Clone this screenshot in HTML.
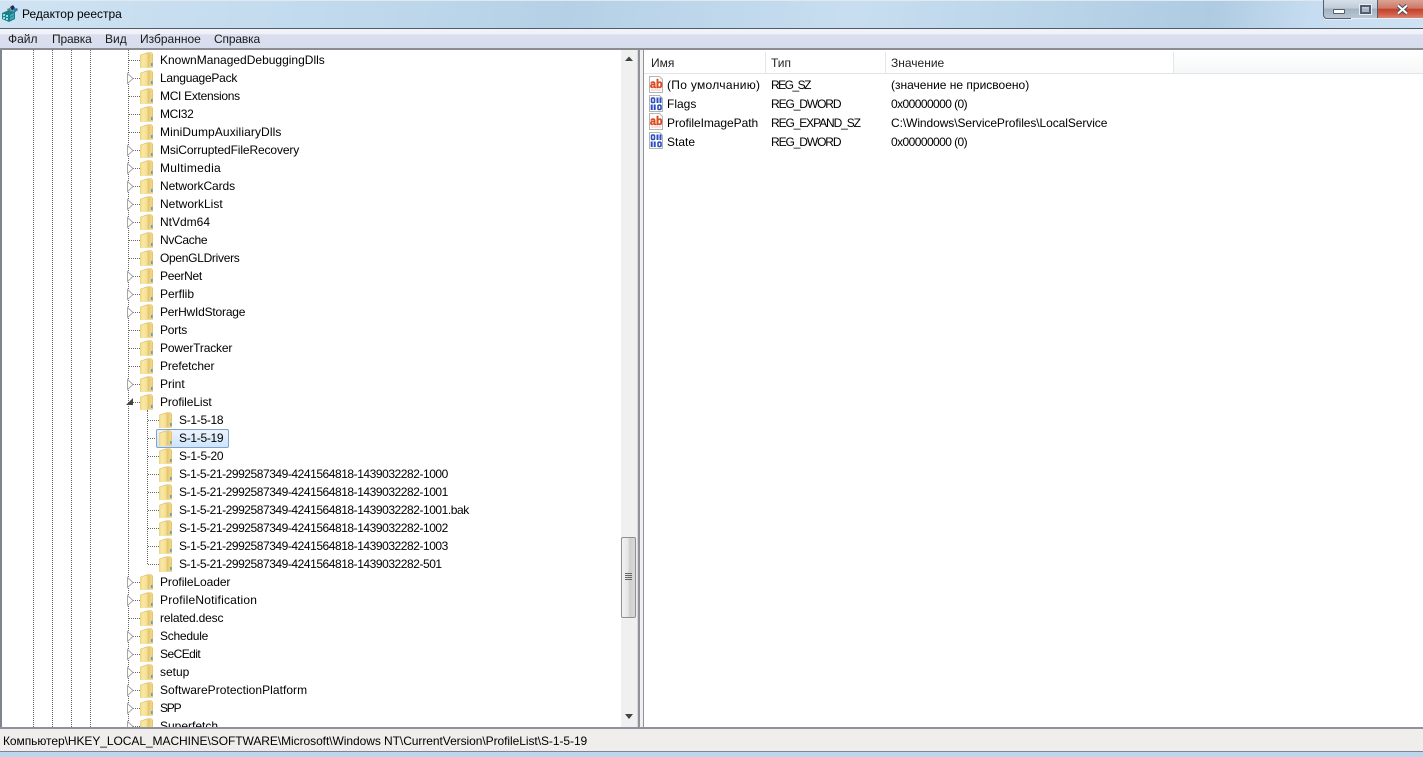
<!DOCTYPE html>
<html><head><meta charset="utf-8"><style>
html,body{margin:0;padding:0;width:1423px;height:757px;overflow:hidden;background:#fff}
body{position:relative;font:12px/16px "Liberation Sans","DejaVu Sans",sans-serif;color:#000}
div,span,svg{position:absolute}
.t{white-space:nowrap;height:16px}
.v{width:0;border-left:1px dotted #666}
.h{height:0;border-top:1px dotted #666}
.m{top:31px;font-size:12px;color:#1a1a1a}
.n{letter-spacing:-.45px}
.c{letter-spacing:-.3px}
.x{letter-spacing:-.57px}
.r{letter-spacing:-1.1px}
</style></head><body>
<svg width="0" height="0" style="left:0;top:0"><defs>
<linearGradient id="fg" x1="0" x2="1" y1="0" y2="0"><stop offset="0" stop-color="#eed27e"/><stop offset=".35" stop-color="#f8e9a6"/><stop offset="1" stop-color="#f4de90"/></linearGradient>
<linearGradient id="fr" x1="0" x2="1" y1="0" y2="0"><stop offset="0" stop-color="#e4c46c"/><stop offset="1" stop-color="#f3d989"/></linearGradient>
<g id="f"><path d="M1 3L8 0.500h4.500L14 2v13.500H1z" fill="#d9b45a"/><path d="M1 3.500L8.500 1V16H1z" fill="url(#fg)"/><path d="M8.500 1h5v14h-5z" fill="url(#fr)"/><path d="M12 11h1.500v3H12z" fill="#5a9fd8"/></g>
<g id="a"><path d="M1.500 0.500v10l5.500-5z" fill="#fff" stroke="#a6a6a6"/></g>
<g id="ab"><path d="M1.500 .5h10l3 3v13h-13z" fill="#fff" stroke="#b4b4b4"/><text x="2" y="12" font-family="Liberation Sans" font-weight="bold" font-size="12" stroke="#dd4a22" stroke-width=".5" fill="#dd4a22" textLength="12.500" lengthAdjust="spacingAndGlyphs">ab</text><rect x="3" y="13.500" width="10" height="1" fill="#e8c4b8"/></g>
<g id="bin"><path d="M1.500 .5h10l3 3v13h-13z" fill="#fff" stroke="#b4b4b4"/><rect x="3.500" y="3" width="3" height="4.500" rx="1" fill="none" stroke="#2b4fc0" stroke-width="1.600"/><rect x="8.500" y="2.500" width="2" height="5.500" fill="#2b4fc0"/><rect x="11.500" y="2.500" width="2" height="5.500" fill="#2b4fc0"/><rect x="2.700" y="9.500" width="2" height="5.500" fill="#2b4fc0"/><rect x="5.700" y="9.500" width="2" height="5.500" fill="#2b4fc0"/><rect x="10" y="10.200" width="3" height="4.300" rx="1" fill="none" stroke="#2b4fc0" stroke-width="1.600"/></g>
</defs></svg>

<!-- title bar -->
<div style="left:0;top:0;width:1423px;height:28px;background:linear-gradient(100deg,#cfe3f3 0,#c3dbee 20%,#b5d0e6 40%,#c8def0 60%,#aecbe2 85%,#c6dcf0 92%,#cfe2f3 100%)"></div>
<div style="left:0;top:0;width:1423px;height:1px;background:#dfe9f2"></div>
<svg style="left:1px;top:5px" width="18" height="18"><path d="M1 8l7-3 6 2v7l-6 3-7-3z" fill="#1c7e8e"/><path d="M2 9h2v2H2zM5 10h2v2H5zM2 12h2v2H2zM5 13h2v2H5z" fill="#8fe0e0"/><path d="M9 10l4-2v2l-4 2zM9 13l4-2v2l-4 2z" fill="#3fb0b8"/><path d="M9 2l3-2 2 3-3 3z" fill="#1d2f6a"/><path d="M12 4l4-1 1 2-4 3z" fill="#2a7fa8"/><path d="M6 4l3-1 1 2-3 1z" fill="#4a8f3a"/></svg>
<div class="t" style="left:22px;top:6px;font-size:12px">Редактор реестра</div>
<!-- caption buttons -->
<div style="left:1323px;top:0;width:27px;height:18px;border:1px solid #55606e;border-top:0;border-radius:0 0 0 4px;background:linear-gradient(#d6e0ea 0,#c0ccd8 45%,#a3b2c2 50%,#b8c6d4 100%);box-shadow:0 1px 0 #e6f0f8"></div>
<div style="left:1333px;top:9px;width:10px;height:3px;background:#fff;border:1px solid #555e70;border-radius:1px"></div>
<div style="left:1351px;top:0;width:26px;height:18px;border-right:1px solid #55606e;background:linear-gradient(#d6e0ea 0,#c0ccd8 45%,#a3b2c2 50%,#b8c6d4 100%);box-shadow:0 1px 0 #e6f0f8"></div>
<div style="left:1360px;top:5px;width:7px;height:5px;border:2px solid #555e70;outline:1px solid #e8eef4"></div>
<div style="left:1378px;top:0;width:45px;height:18px;background:linear-gradient(#dba394 0,#cd7a68 45%,#c4402a 52%,#d2604a 80%,#d88672 100%);box-shadow:0 1px 0 #e6f0f8"></div>
<svg style="left:1396px;top:4px" width="14" height="11"><path d="M2 1.500L11 9.500M11 1.500L2 9.500" stroke="#48505c" stroke-width="4"/><path d="M2 1.500L11 9.500M11 1.500L2 9.500" stroke="#fff" stroke-width="2"/></svg>
<!-- menu -->
<div style="left:0;top:28px;width:1423px;height:1px;background:#4f5a66"></div>
<div style="left:0;top:29px;width:1423px;height:19px;background:linear-gradient(#f2f4f8 0,#f0f2f7 25%,#dadfef 30%,#d8ddee 100%)"></div>
<div style="left:0;top:48px;width:1423px;height:2px;background:#8a8d92"></div>
<div class="t m" style="left:8px">Файл</div>
<div class="t m" style="left:52px;letter-spacing:-.15px">Правка</div>
<div class="t m" style="left:105px">Вид</div>
<div class="t m" style="left:140px">Избранное</div>
<div class="t m" style="left:214px;letter-spacing:-.15px">Справка</div>

<!-- tree -->
<div style="left:0;top:50px;width:2px;height:677px;background:#7f8590"></div>
<div class="v" style="left:33px;top:50px;height:677px"></div>
<div class="v" style="left:52px;top:50px;height:677px"></div>
<div class="v" style="left:71px;top:50px;height:677px"></div>
<div class="v" style="left:90px;top:50px;height:677px"></div>
<div class="v" style="left:128px;top:50px;height:677px"></div>
<div class="v" style="left:147px;top:410px;height:154px"></div>
<div class="h" style="left:129px;top:60px;width:11px"></div><div class="h" style="left:129px;top:78px;width:11px"></div><div class="h" style="left:129px;top:96px;width:11px"></div><div class="h" style="left:129px;top:114px;width:11px"></div><div class="h" style="left:129px;top:132px;width:11px"></div><div class="h" style="left:129px;top:150px;width:11px"></div><div class="h" style="left:129px;top:168px;width:11px"></div><div class="h" style="left:129px;top:186px;width:11px"></div><div class="h" style="left:129px;top:204px;width:11px"></div><div class="h" style="left:129px;top:222px;width:11px"></div><div class="h" style="left:129px;top:240px;width:11px"></div><div class="h" style="left:129px;top:258px;width:11px"></div><div class="h" style="left:129px;top:276px;width:11px"></div><div class="h" style="left:129px;top:294px;width:11px"></div><div class="h" style="left:129px;top:312px;width:11px"></div><div class="h" style="left:129px;top:330px;width:11px"></div><div class="h" style="left:129px;top:348px;width:11px"></div><div class="h" style="left:129px;top:366px;width:11px"></div><div class="h" style="left:129px;top:384px;width:11px"></div><div class="h" style="left:129px;top:402px;width:11px"></div><div class="h" style="left:129px;top:582px;width:11px"></div><div class="h" style="left:129px;top:600px;width:11px"></div><div class="h" style="left:129px;top:618px;width:11px"></div><div class="h" style="left:129px;top:636px;width:11px"></div><div class="h" style="left:129px;top:654px;width:11px"></div><div class="h" style="left:129px;top:672px;width:11px"></div><div class="h" style="left:129px;top:690px;width:11px"></div><div class="h" style="left:129px;top:708px;width:11px"></div><div class="h" style="left:129px;top:726px;width:11px"></div>
<div class="h" style="left:148px;top:420px;width:11px"></div><div class="h" style="left:148px;top:438px;width:11px"></div><div class="h" style="left:148px;top:456px;width:11px"></div><div class="h" style="left:148px;top:474px;width:11px"></div><div class="h" style="left:148px;top:492px;width:11px"></div><div class="h" style="left:148px;top:510px;width:11px"></div><div class="h" style="left:148px;top:528px;width:11px"></div><div class="h" style="left:148px;top:546px;width:11px"></div><div class="h" style="left:148px;top:564px;width:11px"></div>

<div style="left:156px;top:429px;width:71px;height:17px;border:1px solid #7da2ce;border-radius:2px;background:linear-gradient(#ebf4fd,#cfe4fa)"></div>

<svg style="left:0;top:50px;overflow:hidden" width="621" height="677" viewBox="0 50 621 677">
<use href="#f" x="139" y="52"/><use href="#f" x="139" y="70"/><use href="#f" x="139" y="88"/><use href="#f" x="139" y="106"/><use href="#f" x="139" y="124"/><use href="#f" x="139" y="142"/><use href="#f" x="139" y="160"/><use href="#f" x="139" y="178"/><use href="#f" x="139" y="196"/><use href="#f" x="139" y="214"/><use href="#f" x="139" y="232"/><use href="#f" x="139" y="250"/><use href="#f" x="139" y="268"/><use href="#f" x="139" y="286"/><use href="#f" x="139" y="304"/><use href="#f" x="139" y="322"/><use href="#f" x="139" y="340"/><use href="#f" x="139" y="358"/><use href="#f" x="139" y="376"/><use href="#f" x="139" y="394"/>
<use href="#f" x="158" y="412"/><use href="#f" x="158" y="430"/><use href="#f" x="158" y="448"/><use href="#f" x="158" y="466"/><use href="#f" x="158" y="484"/><use href="#f" x="158" y="502"/><use href="#f" x="158" y="520"/><use href="#f" x="158" y="538"/><use href="#f" x="158" y="556"/>
<use href="#f" x="139" y="574"/><use href="#f" x="139" y="592"/><use href="#f" x="139" y="610"/><use href="#f" x="139" y="628"/><use href="#f" x="139" y="646"/><use href="#f" x="139" y="664"/><use href="#f" x="139" y="682"/><use href="#f" x="139" y="700"/><use href="#f" x="139" y="718"/>
<use href="#a" x="126" y="73"/><use href="#a" x="126" y="145"/><use href="#a" x="126" y="163"/><use href="#a" x="126" y="181"/><use href="#a" x="126" y="199"/><use href="#a" x="126" y="217"/><use href="#a" x="126" y="271"/><use href="#a" x="126" y="289"/><use href="#a" x="126" y="307"/><use href="#a" x="126" y="379"/><use href="#a" x="126" y="577"/><use href="#a" x="126" y="595"/><use href="#a" x="126" y="631"/><use href="#a" x="126" y="649"/><use href="#a" x="126" y="667"/><use href="#a" x="126" y="685"/><use href="#a" x="126" y="703"/><use href="#a" x="126" y="721"/>
<path d="M126 405h7v-7z" fill="#444"/>
</svg>

<div class="t" style="left:160px;top:52px">KnownManagedDebuggingDlls</div>
<div class="t" style="left:160px;top:70px;letter-spacing:-.25px">LanguagePack</div>
<div class="t" style="left:160px;top:88px;letter-spacing:-.3px">MCI Extensions</div>
<div class="t" style="left:160px;top:106px;letter-spacing:-.4px">MCI32</div>
<div class="t" style="left:160px;top:124px;letter-spacing:.1px">MiniDumpAuxiliaryDlls</div>
<div class="t" style="left:160px;top:142px;letter-spacing:-.12px">MsiCorruptedFileRecovery</div>
<div class="t" style="left:160px;top:160px;letter-spacing:.3px">Multimedia</div>
<div class="t" style="left:160px;top:178px;letter-spacing:-.08px">NetworkCards</div>
<div class="t" style="left:160px;top:196px">NetworkList</div>
<div class="t" style="left:160px;top:214px">NtVdm64</div>
<div class="t" style="left:160px;top:232px;letter-spacing:-.3px">NvCache</div>
<div class="t" style="left:160px;top:250px;letter-spacing:-.3px">OpenGLDrivers</div>
<div class="t" style="left:160px;top:268px;letter-spacing:-.3px">PeerNet</div>
<div class="t" style="left:160px;top:286px">Perflib</div>
<div class="t" style="left:160px;top:304px;letter-spacing:-.2px">PerHwIdStorage</div>
<div class="t" style="left:160px;top:322px;letter-spacing:-.2px">Ports</div>
<div class="t" style="left:160px;top:340px;letter-spacing:-.17px">PowerTracker</div>
<div class="t" style="left:160px;top:358px;letter-spacing:-.1px">Prefetcher</div>
<div class="t" style="left:160px;top:376px">Print</div>
<div class="t" style="left:160px;top:394px;letter-spacing:-.1px">ProfileList</div>
<div class="t c" style="left:179px;top:412px">S-1-5-18</div>
<div class="t c" style="left:179px;top:430px">S-1-5-19</div>
<div class="t c" style="left:179px;top:448px">S-1-5-20</div>
<div class="t n" style="left:179px;top:466px">S-1-5-21-2992587349-4241564818-1439032282-1000</div>
<div class="t n" style="left:179px;top:484px">S-1-5-21-2992587349-4241564818-1439032282-1001</div>
<div class="t n" style="left:179px;top:502px">S-1-5-21-2992587349-4241564818-1439032282-1001.bak</div>
<div class="t n" style="left:179px;top:520px">S-1-5-21-2992587349-4241564818-1439032282-1002</div>
<div class="t n" style="left:179px;top:538px">S-1-5-21-2992587349-4241564818-1439032282-1003</div>
<div class="t n" style="left:179px;top:556px">S-1-5-21-2992587349-4241564818-1439032282-501</div>
<div class="t" style="left:160px;top:574px;letter-spacing:-.08px">ProfileLoader</div>
<div class="t" style="left:160px;top:592px;letter-spacing:.2px">ProfileNotification</div>
<div class="t" style="left:160px;top:610px;letter-spacing:-.17px">related.desc</div>
<div class="t" style="left:160px;top:628px;letter-spacing:-.25px">Schedule</div>
<div class="t" style="left:160px;top:646px;letter-spacing:-.55px">SeCEdit</div>
<div class="t" style="left:160px;top:664px">setup</div>
<div class="t" style="left:160px;top:682px;letter-spacing:.04px">SoftwareProtectionPlatform</div>
<div class="t" style="left:160px;top:700px;letter-spacing:-1.2px">SPP</div>
<div class="t" style="left:160px;top:718px;height:9px;overflow:hidden">Superfetch</div>

<!-- scrollbar -->
<div style="left:621px;top:50px;width:16px;height:677px;background:#f0f0f0"></div>
<svg style="left:625px;top:56px" width="9" height="6"><path d="M4 0.500L8 5H0z" fill="#444"/></svg>
<svg style="left:625px;top:714px" width="9" height="6"><path d="M0 0h8L4 5z" fill="#444"/></svg>
<div style="left:621px;top:537px;width:13px;height:79px;border:1px solid #8e8f8f;border-radius:2px;background:linear-gradient(90deg,#f2f2f2,#e6e6e6 45%,#cfcfcf 60%,#d8d8d8)"></div>
<div style="left:625px;top:573px;width:7px;height:1px;background:#666;box-shadow:0 2px 0 #666,0 4px 0 #666,0 6px 0 #666"></div>
<!-- splitter -->
<div style="left:637px;top:50px;width:6px;height:677px;background:#f0f0f0;border-left:1px solid #d8d8d8"></div>
<div style="left:638px;top:50px;width:2px;height:677px;background:#8f929a"></div>
<div style="left:643px;top:50px;width:1px;height:677px;background:#8f929a"></div>

<!-- list -->
<div style="left:644px;top:52px;width:779px;height:21px;background:#fff;border-bottom:1px solid #e2e4e8"></div>
<div style="left:644px;top:50px;width:779px;height:2px;background:#fff"></div>
<div style="left:765px;top:52px;width:1px;height:21px;background:#e4e6ea"></div>
<div style="left:885px;top:52px;width:1px;height:21px;background:#e4e6ea"></div>
<div style="left:1173px;top:52px;width:1px;height:21px;background:#e4e6ea"></div>
<div style="left:1174px;top:52px;width:249px;height:21px;background:linear-gradient(#fff,#f6f7f8)"></div>
<div class="t" style="left:651px;top:55px;color:#222">Имя</div>
<div class="t" style="left:771px;top:55px;color:#222">Тип</div>
<div class="t" style="left:891px;top:55px;color:#222">Значение</div>
<svg style="left:648px;top:75px" width="18" height="75"><use href="#ab" x="0" y="1"/><use href="#bin" x="0" y="20"/><use href="#ab" x="0" y="38"/><use href="#bin" x="0" y="57"/></svg>
<div class="t" style="left:667px;top:77px;letter-spacing:.3px">(По умолчанию)</div>
<div class="t" style="left:771px;top:77px;letter-spacing:-1.5px">REG_SZ</div>
<div class="t" style="left:891px;top:77px">(значение не присвоено)</div>
<div class="t" style="left:667px;top:96px">Flags</div>
<div class="t r" style="left:771px;top:96px">REG_DWORD</div>
<div class="t x" style="left:891px;top:96px">0x00000000 (0)</div>
<div class="t" style="left:667px;top:115px;letter-spacing:-.06px">ProfileImagePath</div>
<div class="t r" style="left:771px;top:115px">REG_EXPAND_SZ</div>
<div class="t" style="left:891px;top:115px;letter-spacing:-.08px">C:\Windows\ServiceProfiles\LocalService</div>
<div class="t" style="left:667px;top:134px">State</div>
<div class="t r" style="left:771px;top:134px">REG_DWORD</div>
<div class="t x" style="left:891px;top:134px">0x00000000 (0)</div>

<!-- status -->
<div style="left:0;top:727px;width:1423px;height:2px;background:#8f929a"></div>
<div style="left:0;top:729px;width:1423px;height:22px;background:#f0eeed"></div>
<div style="left:0;top:751px;width:1423px;height:1px;background:#7f8590"></div>
<div style="left:0;top:752px;width:1423px;height:5px;background:#bcd6ee"></div>
<div class="t" style="left:3px;top:733px;letter-spacing:-.06px">Компьютер\HKEY_LOCAL_MACHINE\SOFTWARE\Microsoft\Windows NT\CurrentVersion\ProfileList\S-1-5-19</div>
</body></html>
